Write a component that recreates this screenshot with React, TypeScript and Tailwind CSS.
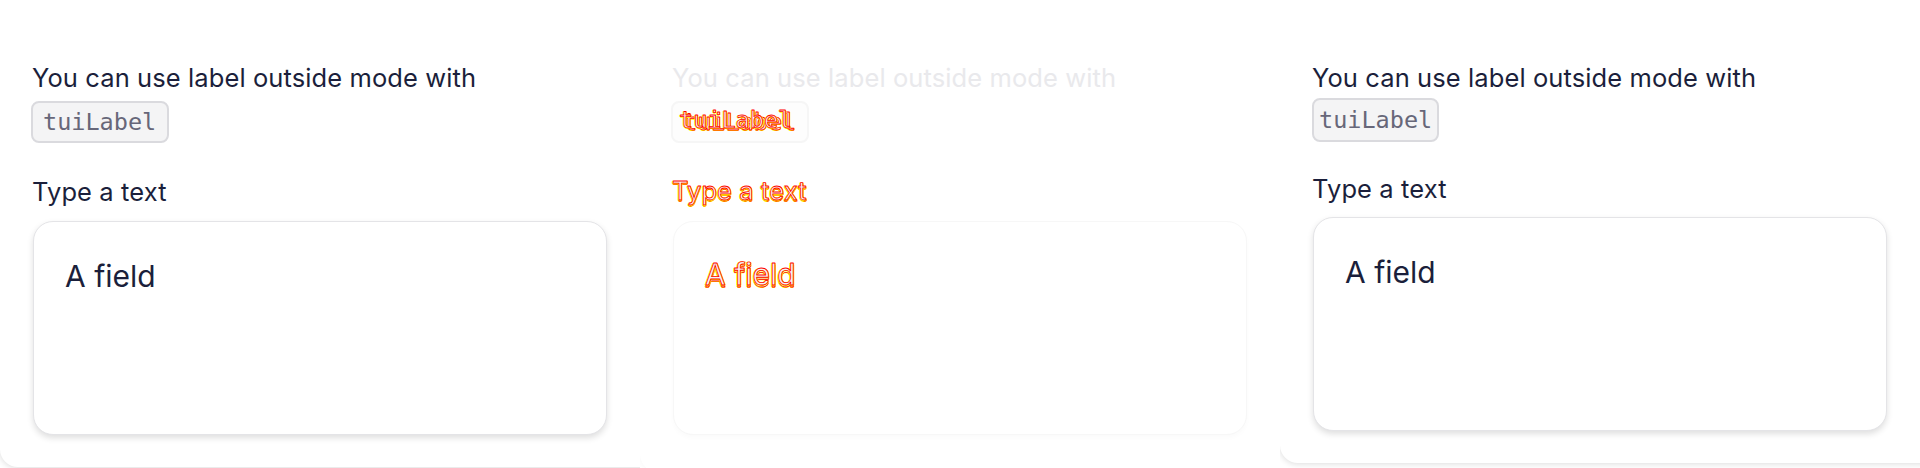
import React from 'react';

type Variant = 'expected' | 'diff' | 'actual';

const SANS = "font-['Inter','Noto_Sans',sans-serif]";
const MONO = "font-['DejaVu_Sans_Mono','Liberation_Mono',monospace]";

// red/yellow pixels of the diff view: both versions of the text overlaid
const DiffText: React.FC<{ text: string; dx: number; dy: number }> = ({ text, dx, dy }) => {
    return (
        <span className="relative text-[#f4f4f4] [-webkit-text-stroke:0.8px_#ff0000] [text-shadow:1px_0_0_#ffff00,0_1px_0_#ffff00,-1px_0_0_#ffff00]">
            {text}
            <span className="absolute left-0 top-0 whitespace-nowrap" style={{ transform: `translate(${dx}px, ${dy}px)` }}>
                {text}
            </span>
        </span>
    );
};

const Panel: React.FC<{ variant: Variant }> = ({ variant }) => {
    const diff = variant === 'diff';
    const actual = variant === 'actual';

    return (
        <div className="w-[640px] h-[468px] shrink-0 overflow-hidden bg-white">
            <div
                className={`-mt-[20px] w-[720px] rounded-[18px] bg-white pt-[80px] pl-[32px] ${
                    actual ? 'h-[483px]' : diff ? 'h-[492px]' : 'h-[487px]'
                } ${diff ? 'shadow-[0_1px_6px_rgba(0,0,0,0.03)]' : 'shadow-[0_1px_6px_rgba(0,0,0,0.14)]'}`}
            >
                <div className="w-[575px] flex flex-col items-start">
                    <div className={`${SANS} text-[25.5px] leading-[36px] tracking-[0.1px] ${diff ? 'text-[#e9e9ec]' : 'text-[#1b1f3b]'}`}>
                        You can use label outside mode with
                    </div>
                    <code
                        className={`${MONO} text-[23.5px] leading-[30px] border-2 rounded-[8px] ${
                            actual
                                ? 'mt-[2px] h-[44px] px-[5px] py-[5px] ml-0'
                                : 'mt-[5px] h-[42px] pl-[10px] pr-[11px] py-[4px] -ml-[1px]'
                        } ${diff ? 'bg-[#fdfdfd] border-[#f6f6f6]' : 'bg-[#f4f4f5] border-[#dadade] text-[#676779]'}`}
                    >
                        {diff ? <DiffText text="tuiLabel" dx={-4} dy={-3} /> : 'tuiLabel'}
                    </code>
                    <div className={`${SANS} text-[25.5px] leading-[36px] tracking-[0.1px] ${actual ? 'mt-[29px]' : 'mt-[31px]'} ${diff ? '' : 'text-[#1b1f3b]'}`}>
                        {diff ? <DiffText text="Type a text" dx={0} dy={-3} /> : 'Type a text'}
                    </div>
                    <div
                        className={`w-[574px] h-[214px] ml-[1px] rounded-[20px] border bg-white px-[31px] pt-[34px] ${actual ? 'mt-[10px]' : 'mt-[11px]'} ${
                            diff
                                ? 'border-[#f7f7f7] shadow-[0_3px_5px_rgba(0,0,0,0.02)]'
                                : 'border-[#e4e4e7] shadow-[0_3px_6px_rgba(0,0,0,0.13)]'
                        }`}
                    >
                        <div className={`${SANS} text-[30px] leading-[40px] ${diff ? '' : 'text-[#1b1f3b]'}`}>
                            {diff ? <DiffText text="A field" dx={0} dy={-4} /> : 'A field'}
                        </div>
                    </div>
                </div>
            </div>
        </div>
    );
};

export default function App() {
    return (
        <div className="flex w-[1920px] h-[468px] bg-white overflow-hidden">
            <Panel variant="expected" />
            <Panel variant="diff" />
            <Panel variant="actual" />
        </div>
    );
}
